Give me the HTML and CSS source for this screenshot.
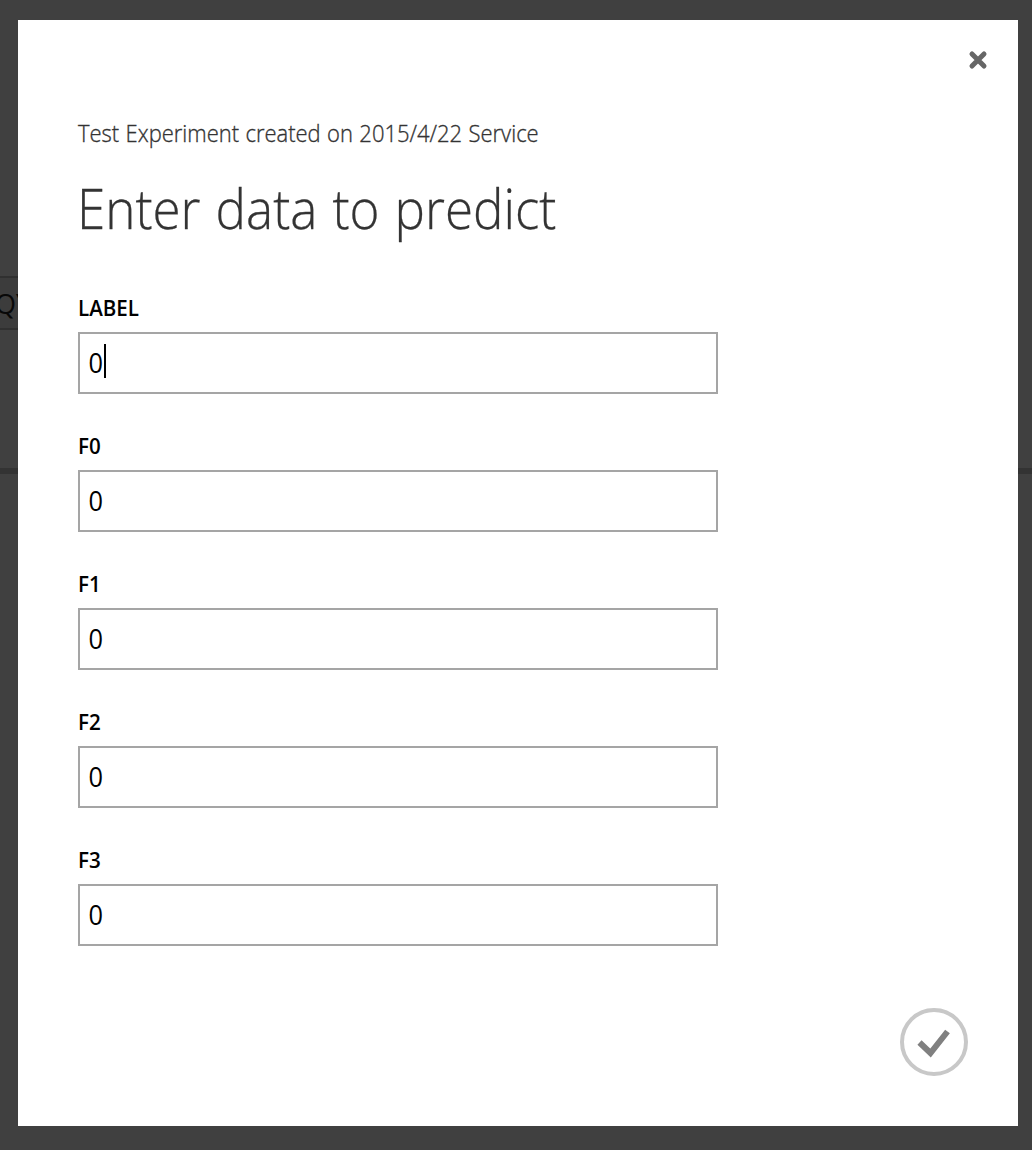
FILE: index.html
```
<!DOCTYPE html>
<html lang="en">
<head>
<meta charset="utf-8">
<title>Enter data to predict</title>
<link rel="stylesheet" href="styles.css">
</head>
<body>
<div class="backdrop">
  <div class="page-button">QY</div>
  <div class="page-rule"></div>
</div>
<main class="dialog">
  <button class="close" aria-label="Close">
    <svg width="20" height="20" viewBox="0 0 20 20"><path d="M4 4L16 16M16 4L4 16"/></svg>
  </button>
  <p class="subtitle"><span>Test Experiment created on 2015/4/22 Service</span></p>
  <h1 class="title"><span>Enter data to predict</span></h1>
  <form class="fields">
    <div class="field"><div class="label"><span>LABEL</span></div><div class="input"><span>0</span><i class="caret"></i></div></div>
    <div class="field"><div class="label"><span>F0</span></div><div class="input"><span>0</span></div></div>
    <div class="field"><div class="label"><span>F1</span></div><div class="input"><span>0</span></div></div>
    <div class="field"><div class="label"><span>F2</span></div><div class="input"><span>0</span></div></div>
    <div class="field"><div class="label"><span>F3</span></div><div class="input"><span>0</span></div></div>
  </form>
  <button class="submit" aria-label="Submit">
    <svg width="68" height="68" viewBox="0 0 68 68"><circle cx="34" cy="34" r="32"/><path d="M19.5 34.5L30.5 45L47.5 23.5"/></svg>
  </button>
</main>
</body>
</html>
```

FILE: styles.css
```
* { box-sizing: border-box; }
body {
  margin: 0;
  width: 1032px;
  height: 1150px;
  padding: 20px 14px 24px 18px;
  overflow: hidden;
  background: #404040;
  font-family: "Open Sans", "Noto Sans", sans-serif;
}
.backdrop { position: absolute; inset: 0; overflow: hidden; }
.page-button {
  position: absolute;
  left: -5px;
  top: 276px;
  width: 60px;
  height: 54px;
  border: solid #303030;
  border-width: 2px 0;
  background: #3c3c3c;
  color: #080808;
  font-size: 27px;
  line-height: 52px;
}
.page-rule {
  position: absolute;
  left: 0;
  right: 0;
  top: 468px;
  height: 6px;
  background: #333;
}
.dialog {
  position: relative;
  display: flex;
  flex-direction: column;
  height: 1106px;
  padding: 30px 50px 50px 60px;
  background: #fff;
}
button { padding: 0; border: 0; background: none; }
svg { display: block; fill: none; }
.close { align-self: flex-end; margin-right: -20px; height: 20px; }
.close path { stroke: #666; stroke-width: 5; stroke-linecap: round; }
.subtitle, .title, .label { white-space: nowrap; transform-origin: left; }
.subtitle {
  margin: 45px 0 0 -0.5px;
  font-size: 24px;
  font-weight: 300;
  line-height: 36px;
  color: #333;
  -webkit-text-stroke: 0.35px #333;
  word-spacing: 0.8px;
  transform: scaleX(0.915);
}
.title {
  margin: 34px 0 0 -1px;
  font-size: 56px;
  font-weight: 300;
  line-height: 44px;
  color: #333;
  -webkit-text-stroke: 0.3px #333;
  word-spacing: 2px;
  transform: scaleX(0.913);
}
.fields { display: flex; flex-direction: column; gap: 36px; margin-top: 63px; }
.label {
  height: 40px;
  margin-left: -0.5px;
  font-size: 22px;
  font-weight: 600;
  line-height: 31px;
  color: #000;
  transform: scaleX(0.935);
}
.input {
  display: flex;
  align-items: center;
  width: 640px;
  height: 62px;
  padding-left: 8px;
  border: 2px solid #a5a5a5;
  font-size: 27px;
  color: #000;
}
.input span { width: 16px; line-height: 34px; transform: scaleX(0.94); }
.caret { width: 2px; height: 34px; margin-bottom: 4px; background: #000; }
.submit { align-self: flex-end; width: 68px; height: 68px; margin-top: auto; }
.submit circle { stroke: #c8c8c8; stroke-width: 4; }
.submit path { stroke: #808080; stroke-width: 6; }
```
